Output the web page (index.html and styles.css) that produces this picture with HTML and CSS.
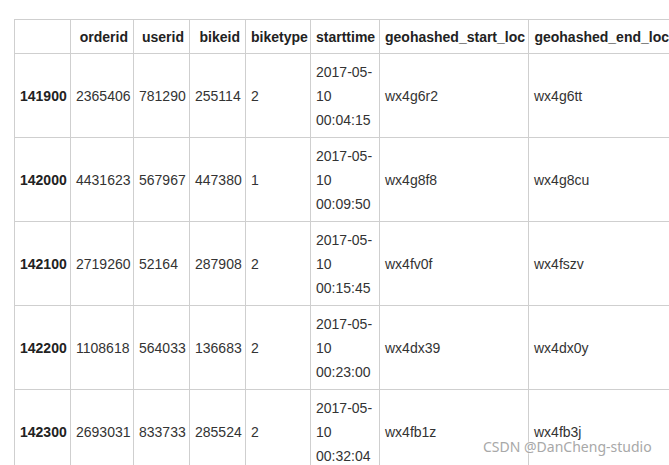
FILE: index.html
```html
<!DOCTYPE html>
<html>
<head>
<meta charset="utf-8">
<link rel="stylesheet" href="styles.css">
</head>
<body>
<div class="wrap">
<table class="dataframe">
<thead>
<tr>
<th class="c1"></th>
<th class="c2">orderid</th>
<th class="c3">userid</th>
<th class="c4">bikeid</th>
<th class="c5">biketype</th>
<th class="c6">starttime</th>
<th class="c7">geohashed_start_loc</th>
<th class="c8">geohashed_end_loc</th>
</tr>
</thead>
<tbody>
<tr><th>141900</th><td>2365406</td><td>781290</td><td>255114</td><td>2</td><td>2017-05-10 00:04:15</td><td>wx4g6r2</td><td>wx4g6tt</td></tr>
<tr><th>142000</th><td>4431623</td><td>567967</td><td>447380</td><td>1</td><td>2017-05-10 00:09:50</td><td>wx4g8f8</td><td>wx4g8cu</td></tr>
<tr><th>142100</th><td>2719260</td><td>52164</td><td>287908</td><td>2</td><td>2017-05-10 00:15:45</td><td>wx4fv0f</td><td>wx4fszv</td></tr>
<tr><th>142200</th><td>1108618</td><td>564033</td><td>136683</td><td>2</td><td>2017-05-10 00:23:00</td><td>wx4dx39</td><td>wx4dx0y</td></tr>
<tr><th>142300</th><td>2693031</td><td>833733</td><td>285524</td><td>2</td><td>2017-05-10 00:32:04</td><td>wx4fb1z</td><td>wx4fb3j</td></tr>
</tbody>
</table>
</div>
<div class="watermark">CSDN @DanCheng-studio</div>
</body>
</html>
```
FILE: styles.css
```css
html, body {
  margin: 0;
  padding: 0;
  overflow: hidden;
  background: #fff;
  width: 669px;
  height: 465px;
}
.wrap {
  padding: 19px 0 0 14px;
  width: 700px;
}
.dataframe {
  border-collapse: collapse;
  table-layout: fixed;
  width: 660px;
  font-family: "Liberation Sans", Arial, sans-serif;
  font-size: 14px;
  color: #333;
}
.dataframe th,
.dataframe td {
  border: 1px solid #cfcfcf;
  box-sizing: border-box;
  line-height: 24px;
  vertical-align: middle;
  overflow: hidden;
}
.dataframe thead th {
  padding: 5px 5px 4px 5px;
  text-align: right;
  font-weight: bold;
  color: #222;
  white-space: nowrap;
}
.dataframe tbody th {
  padding: 6px 5px 5px 5px;
  text-align: right;
  font-weight: bold;
  color: #222;
}
.dataframe td {
  padding: 6px 5px 5px 5px;
  text-align: left;
}
.c1 { width: 56px; }
.c2 { width: 63px; }
.c3 { width: 56px; }
.c4 { width: 56px; }
.c5 { width: 65px; }
.c6 { width: 69px; }
.c7 { width: 149px; }
.c8 { width: 146px; }
.watermark {
  position: absolute;
  left: 483px;
  top: 437px;
  font-family: "Noto Sans", "Open Sans", sans-serif;
  font-size: 14px;
  line-height: 20px;
  color: #a8a8a8;
  text-shadow: 0 0 2px #fff, 0 0 2px #fff;
  white-space: nowrap;
}
```
